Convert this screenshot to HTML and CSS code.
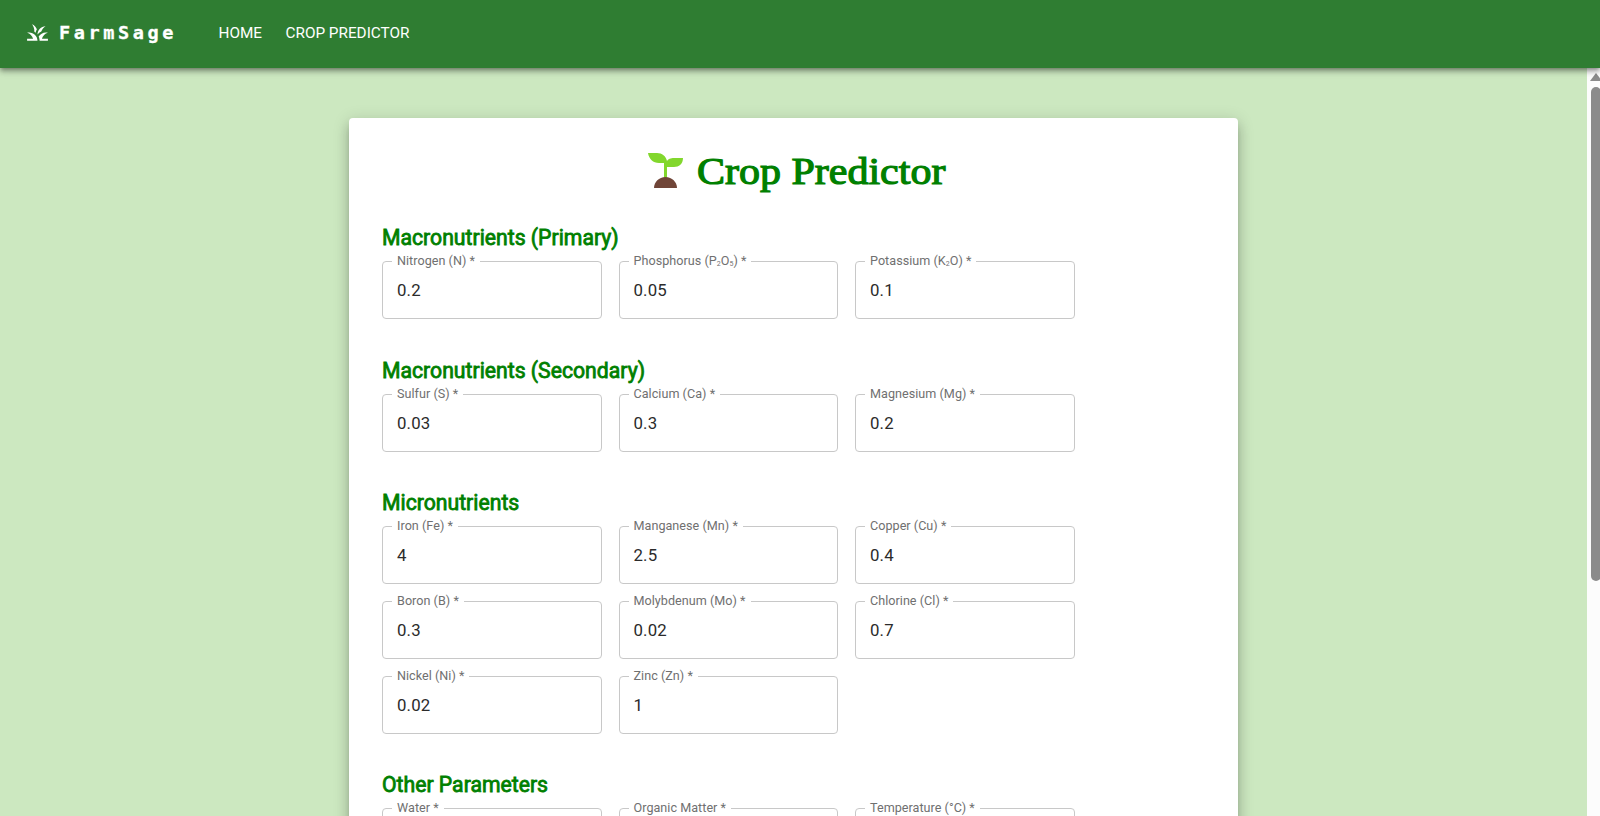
FILE: index.html
```html
<!DOCTYPE html>
<html lang="en">
<head>
<meta charset="utf-8">
<title>FarmSage</title>
<link rel="stylesheet" href="styles.css">
</head>
<body>
<header class="navbar">
  <svg class="logo" viewBox="0 0 24 24"><path d="M12 20H2v-2h5.75C7.02 15.190 4.810 12.990 2 12.260 2.640 12.100 3.310 12 4 12c4.420 0 8 3.580 8 8zM22 12.260c-.640-.160-1.310-.260-2-.260-2.930 0-5.480 1.580-6.880 3.930.290.660.530 1.350.670 2.070.130.650.200 1.310.210 2h8v-2h-5.750c.730-2.810 2.940-5.010 5.750-5.740zM15.640 11.020c.780-2.090 2.230-3.840 4.090-5C15.440 6.160 12 9.670 12 14v.020c.950-1.270 2.200-2.300 3.640-3zM11.420 8.850C10.580 6.660 8.880 4.890 6.700 4c1.440 1.850 2.300 4.180 2.300 6.710 0 .210-.030.410-.040.610.430.240.830.520 1.220.820.110-1.180.560-2.290 1.240-3.290z"/></svg>
  <span class="brand">FarmSage</span>
  <nav class="links"><a>HOME</a><a>CROP PREDICTOR</a></nav>
</header>
<div class="viewport">
  <main class="page">
    <section class="card">
      <h1 class="title">
        <svg class="sprout" viewBox="0 0 36 36"><path class="leaf" d="M0 0h9c5 0 9 3 10 8 2-3 5-3 8-3h8c0 6-4 9-9 9h-7v13h-3V10h-5C5 10 1 6 0 0z"/><path class="soil" d="M6 35c0-6 5-11 11.500-11S29 29 29 35z"/></svg>
        <span class="title-text">Crop Predictor</span>
      </h1>
      <h2 class="heading">Macronutrients (Primary)</h2>
      <div class="grid">
        <fieldset class="field"><legend>Nitrogen (N) *</legend>0.2</fieldset>
        <fieldset class="field"><legend>Phosphorus (P<small>2</small>O<small>5</small>) *</legend>0.05</fieldset>
        <fieldset class="field"><legend>Potassium (K<small>2</small>O) *</legend>0.1</fieldset>
      </div>
      <h2 class="heading">Macronutrients (Secondary)</h2>
      <div class="grid">
        <fieldset class="field"><legend>Sulfur (S) *</legend>0.03</fieldset>
        <fieldset class="field"><legend>Calcium (Ca) *</legend>0.3</fieldset>
        <fieldset class="field"><legend>Magnesium (Mg) *</legend>0.2</fieldset>
      </div>
      <h2 class="heading">Micronutrients</h2>
      <div class="grid">
        <fieldset class="field"><legend>Iron (Fe) *</legend>4</fieldset>
        <fieldset class="field"><legend>Manganese (Mn) *</legend>2.5</fieldset>
        <fieldset class="field"><legend>Copper (Cu) *</legend>0.4</fieldset>
        <fieldset class="field"><legend>Boron (B) *</legend>0.3</fieldset>
        <fieldset class="field"><legend>Molybdenum (Mo) *</legend>0.02</fieldset>
        <fieldset class="field"><legend>Chlorine (Cl) *</legend>0.7</fieldset>
        <fieldset class="field"><legend>Nickel (Ni) *</legend>0.02</fieldset>
        <fieldset class="field"><legend>Zinc (Zn) *</legend>1</fieldset>
      </div>
      <h2 class="heading">Other Parameters</h2>
      <div class="grid">
        <fieldset class="field"><legend>Water *</legend></fieldset>
        <fieldset class="field"><legend>Organic Matter *</legend></fieldset>
        <fieldset class="field"><legend>Temperature (°C) *</legend></fieldset>
      </div>
    </section>
  </main>
  <div class="scrollbar"><span class="arrow"></span><span class="thumb"></span></div>
</div>
</body>
</html>
```
FILE: styles.css
```css
* { box-sizing: border-box; }
body {
  margin: 0;
  height: 816px;
  overflow: hidden;
  display: flex;
  flex-direction: column;
  background: #cce8c0;
  font-family: Roboto, "Liberation Sans", sans-serif;
}
.navbar {
  height: 68px;
  flex: none;
  display: flex;
  align-items: center;
  padding: 0 25px 3px;
  background: #2f7d32;
  color: #fff;
  z-index: 1;
  box-shadow: 0 2px 4px -1px rgba(0,0,0,.3), 0 4px 5px rgba(0,0,0,.2), 0 1px 10px rgba(0,0,0,.14);
}
.logo { width: 25px; height: 25px; margin-right: 9px; fill: #fff; }
.brand {
  width: 159.500px;
  font: bold 18.500px/24px "DejaVu Sans Mono", monospace;
  letter-spacing: 3.600px;
  -webkit-text-stroke: .300px #fff;
}
.links { display: flex; gap: 23.500px; font-size: 15.300px; line-height: 24px; }
.viewport { flex: 1; min-height: 0; display: flex; }
.page { flex: 1; overflow: hidden; padding: 50px 0 0 349px; }
.card {
  width: 889px;
  height: 900px;
  padding: 27px 33px;
  background: #fff;
  border-radius: 4px;
  box-shadow: 0 5px 6px -3px rgba(0,0,0,.2), 0 9px 12px 1px rgba(0,0,0,.14), 0 3px 16px 2px rgba(0,0,0,.12);
}
.title {
  margin: 0 0 26.100px;
  padding-left: 266px;
  height: 52px;
  display: flex;
  align-items: center;
  gap: 13px;
  color: #008000;
}
.sprout { width: 36px; height: 36px; }
.leaf { fill: #82d72d; }
.soil { fill: #704538; }
.title-text {
  font: 400 38px/48px "Liberation Serif", serif;
  -webkit-text-stroke: 1.200px #008000;
  white-space: nowrap;
  transform: scaleX(1.105);
  transform-origin: left;
}
.heading {
  margin: 0;
  height: 29px;
  font-size: 21.200px;
  line-height: 29px;
  font-weight: 400;
  color: #008000;
  -webkit-text-stroke: .800px #008000;
}
.grid {
  display: grid;
  grid-template-columns: repeat(3, 219.500px);
  column-gap: 17px;
  row-gap: 10px;
  margin: 2px 0 36.450px;
}
.field {
  margin: 0;
  height: 65px;
  min-width: 0;
  border: 1px solid #c8c8c8;
  border-radius: 4px;
  padding: 8px 9px 0;
  text-indent: 5px;
  color: #2b2b2b;
  font-size: 16.800px;
  line-height: 26px;
  letter-spacing: .150px;
}
.field legend {
  padding: 0 5px 2px;
  text-indent: 0;
  font-size: 12.600px;
  line-height: 13px;
  letter-spacing: .030px;
  color: #707070;
}
.field small { font-size: 7px; line-height: 1; position: relative; top: 1px; }
.scrollbar { width: 13px; background: #fcfcfc; display: flex; flex-direction: column; align-items: flex-end; overflow: hidden; }
.arrow { margin: 5px -2px 0 0; border: 6px solid transparent; border-top: 0; border-bottom: 8px solid #8b8b8b; }
.thumb { margin: 6px -1px 0 0; width: 10px; height: 494px; border-radius: 5px; background: #8b8b8b; }
```
